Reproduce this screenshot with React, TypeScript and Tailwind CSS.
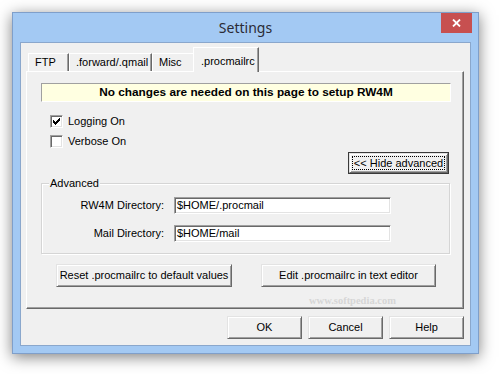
import React from "react";

const ui = "font-['Liberation_Sans',Arial,sans-serif] text-[11px] leading-[13px] text-black";

const raised =
  "bg-[#f0f0f0] border border-t-[#e3e3e3] border-l-[#e3e3e3] border-b-[#696969] border-r-[#696969] shadow-[inset_1px_1px_0_0_#ffffff,inset_-1px_-1px_0_0_#a0a0a0]";

const sunken =
  "border border-t-[#a0a0a0] border-l-[#a0a0a0] border-b-white border-r-white shadow-[inset_1px_1px_0_0_#696969,inset_-1px_-1px_0_0_#e3e3e3]";

const Button = ({ label, className }: { label: string; className: string }) => (
  <button className={`${raised} ${ui} flex items-center justify-center shrink-0 ${className}`}>
    {label}
  </button>
);

const Checkbox = ({ checked, label }: { checked: boolean; label: string }) => (
  <label className="flex items-center gap-[5px] h-[13px]">
    <span className={`${sunken} bg-white w-[13px] h-[13px] flex items-center justify-center shrink-0`}>
      {checked && (
        <svg width="7" height="7" viewBox="0 0 7 7">
          <path d="M6 0h1v1h-1zM5 1h2v1h-2zM0 2h1v1h-1zM4 2h3v1h-3zM0 3h2v1h-2zM3 3h3v1h-3zM0 4h5v1h-5zM1 5h3v1h-3zM2 6h1v1h-1z" fill="#000" />
        </svg>
      )}
    </span>
    <span>{label}</span>
  </label>
);

const Field = ({ value }: { value: string }) => (
  <div className={`${sunken} bg-white h-[17px] flex items-center pl-[2px] whitespace-nowrap overflow-hidden`}>
    {value}
  </div>
);

const tabs = [
  { label: "FTP", w: "w-[41px]" },
  { label: ".forward/.qmail", w: "w-[83px]" },
  { label: "Misc", w: "w-[43px]" },
];

export default function App() {
  return (
    <div className="w-[499px] h-[374px] bg-white pt-[12px] pl-[12px] overflow-hidden">
      <div className="w-[467px] h-[342px] border border-[#7f9fca] bg-[#a3c9f3] px-[7px] pb-[7px] flex flex-col shadow-[0_3px_14px_rgba(0,0,0,0.5)]">
        {/* Title bar */}
        <div className="h-[29px] grid grid-cols-[1fr_auto_1fr] items-center">
          <div />
          <span className="font-['Noto_Sans',sans-serif] text-[14px] text-[#2b2b35] leading-none">
            Settings
          </span>
          <div className="justify-self-end self-start mr-[-1px] w-[31px] h-[20px] bg-[#c75050] flex items-center justify-center">
            <svg width="9" height="8" viewBox="0 0 9 8">
              <path d="M1 0.5 L8 7.5 M8 0.5 L1 7.5" stroke="#fff" strokeWidth="1.8" />
            </svg>
          </div>
        </div>

        {/* Client */}
        <div className={`${ui} h-[304px] border border-[#8aa7cc] bg-[#f0f0f0] pl-[5px] pr-[6px] pt-[4px] flex flex-col`}>
          {/* Tabs */}
          <div className="flex items-end h-[24px] pl-[2px]">
            {tabs.map((t) => (
              <div
                key={t.label}
                className={`${t.w} h-[18px] pl-[6px] flex items-center border-t border-l border-t-white border-l-white border-r border-r-[#696969] shadow-[inset_-1px_0_0_0_#a0a0a0] whitespace-nowrap`}
              >
                {t.label}
              </div>
            ))}
            <div className="relative z-10 ml-[-2px] mb-[-1px] w-[66px] h-[25px] pl-[7px] pt-[7px] bg-[#f0f0f0] border-t border-l border-t-white border-l-white border-r border-r-[#696969] shadow-[inset_-1px_0_0_0_#a0a0a0] whitespace-nowrap">
              .procmailrc
            </div>
          </div>

          {/* Tab panel */}
          <div className="relative h-[238px] border border-t-white border-l-white border-b-[#696969] border-r-[#696969] shadow-[inset_-1px_-1px_0_0_#a0a0a0] pt-[11px] pl-[14px] pr-[12px] flex flex-col">
            <div className="h-[19px] bg-[#ffffe1] border border-t-[#a0a0a0] border-l-[#a0a0a0] border-b-white border-r-white flex items-center justify-center font-bold text-[11.8px]">
              No changes are needed on this page to setup RW4M
            </div>

            <div className="mt-[13px] pl-[9px] flex flex-col gap-[7px]">
              <Checkbox checked label="Logging On" />
              <Checkbox checked={false} label="Verbose On" />
            </div>

            <button className="self-end mr-[2px] mt-[4px] w-[101px] h-[22px] border border-[#3a3a3a] flex">
              <span className={`${raised} flex-1 flex p-[2px]`}>
                <span className="flex-1 border border-dotted border-black flex items-center justify-center">
                  &lt;&lt; Hide advanced
                </span>
              </span>
            </button>

            {/* Advanced group */}
            <div className="relative mt-[9px] mr-[1px] h-[71px] border border-[#d5d5d5] shadow-[inset_1px_1px_0_0_#ffffff,1px_1px_0_0_#ffffff] pt-[13px]">
              <span className="absolute top-[-7px] left-[7px] px-[1px] bg-[#f0f0f0]">Advanced</span>
              <div className="grid grid-cols-[122px_217px] gap-x-[10px] gap-y-[11px] items-center">
                <span className="text-right">RW4M Directory:</span>
                <Field value="$HOME/.procmail" />
                <span className="text-right">Mail Directory:</span>
                <Field value="$HOME/mail" />
              </div>
            </div>

            <div className="mt-[10px] pl-[15px] flex gap-[29px]">
              <Button label="Reset .procmailrc to default values" className="w-[176px] h-[23px]" />
              <Button label="Edit .procmailrc in text editor" className="w-[175px] h-[23px]" />
            </div>

            {/* watermark */}
            <span className="absolute left-[282px] top-[222px] font-['Liberation_Serif',serif] font-bold text-[10.5px] text-[#d6d6d6] pointer-events-none">
              www.softpedia.com
            </span>
          </div>

          {/* Dialog buttons */}
          <div className="mt-[7px] flex justify-end gap-[6px]">
            <Button label="OK" className="w-[75px] h-[23px]" />
            <Button label="Cancel" className="w-[75px] h-[23px]" />
            <Button label="Help" className="w-[75px] h-[23px]" />
          </div>
        </div>
      </div>
    </div>
  );
}
